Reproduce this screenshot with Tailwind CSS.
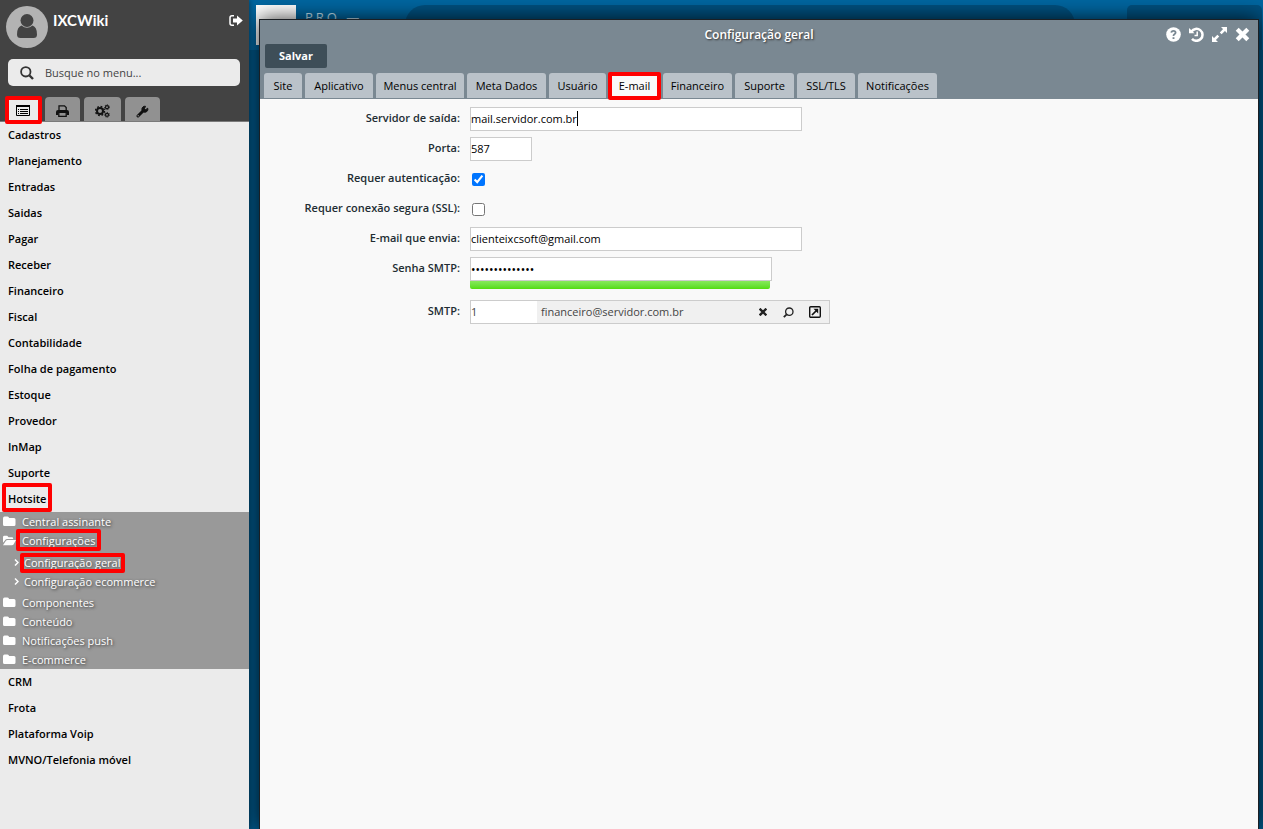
<!DOCTYPE html>
<html lang="pt-BR">
<head>
<meta charset="utf-8">
<title>IXCWiki - Configuração geral</title>
<script src="https://cdn.jsdelivr.net/npm/@tailwindcss/browser@4"></script>
</head>
<body class="flex h-screen overflow-hidden bg-[#0066a0] font-['Open_Sans',sans-serif] text-[11px] text-black">
<svg class="hidden">
  <symbol id="folder" viewBox="0 0 13 11"><path fill="#fff" d="M0 2.500Q0 .5 1.500 .5H4.500Q6 .5 6 2H11Q12.500 2 12.500 3.500V8.500Q12.500 10 11 10H1.500Q0 10 0 8.500Z"/></symbol>
</svg>

<aside class="relative z-10 flex w-[249px] shrink-0 flex-col bg-[#ebebeb] shadow-[0_0_6px_rgba(0,0,0,0.5)]">
  <header class="flex h-[122px] flex-col border-b border-[#7a7a7a] bg-[#434343]">
    <div class="flex items-start px-[6px] pt-[6px]">
      <svg class="size-[42px]" viewBox="0 0 42 42"><circle cx="21" cy="21" r="21" fill="#b3b3b3"/><circle cx="21" cy="14.500" r="6.500" fill="#434343"/><path fill="#434343" d="M15.500 19.500Q21 24 26.500 19.500Q31 21 31 28.500Q31 32 27.500 32H14.500Q11 32 11 28.500Q11 21 15.500 19.500Z"/></svg>
      <h1 class="ml-[5px] mt-[4px] flex-1 font-['Lato',sans-serif] text-[15px] leading-[20px] font-bold text-white">IXCWiki</h1>
      <button type="button" aria-label="Sair" class="mt-[9px]"><svg class="h-[11px] w-[14px]" viewBox="0 0 14 11"><path d="M5 .8H3Q1 .8 1 2.800V8.200Q1 10.200 3 10.200H5" fill="none" stroke="#fff" stroke-width="1.500"/><path fill="#fff" d="M4 3.500H8V.5L13.800 5.500L8 10.500V7.500H4Z"/></svg></button>
    </div>
    <label class="mr-[9px] ml-2 mt-[11px] flex h-[27px] items-center rounded-[5px] bg-[#ebebeb] pl-3">
      <svg class="size-[14px]" viewBox="0 0 14 14" fill="none" stroke="#333" stroke-width="1.800"><circle cx="5.800" cy="5.800" r="4.700"/><path d="M9.500 9.500L13 13" stroke-width="2.400"/></svg>
      <input type="text" aria-label="Busque no menu" placeholder="Busque no menu..." class="ml-[11px] w-44 bg-transparent pt-px outline-none placeholder:text-[#444]">
    </label>
    <nav class="mt-auto flex gap-[4px] pl-[6px]">
      <button type="button" aria-label="Menu" class="relative flex h-[24px] w-[35px] items-center justify-center rounded-t bg-[#ebebeb] pt-[2px] pr-px"><svg class="h-[11px] w-[14px]" viewBox="0 0 14 11"><path fill="none" stroke="#000" d="M.5 .5H13.500V10.500H.5Z"/><path stroke="#000" d="M0 1H14" stroke-width="2"/><path stroke="#000" d="M2 4.500H3M4 4.500H12M2 6.500H3M4 6.500H12M2 8.500H3M4 8.500H12"/></svg><span class="absolute -inset-x-px -top-px -bottom-[3px] rounded-[2px] border-4 border-[#f00]"></span></button>
      <button type="button" aria-label="Imprimir" class="flex h-[24px] w-[35px] items-center justify-center rounded-t bg-[#919191] pt-1"><svg class="h-[12px] w-[13px]" viewBox="0 0 13 12"><path d="M3 6V.8H8.500L10.200 2.500V6" fill="none" stroke="#111" stroke-width="1.300"/><path fill="#111" d="M0 7Q0 5 2 5H11Q13 5 13 7V10H10.800V8H2.200V10H0Z"/><path d="M2.800 8V11.300H10.200V8" fill="none" stroke="#111" stroke-width="1.300"/></svg></button>
      <button type="button" aria-label="Engrenagens" class="flex h-[24px] w-[37px] items-center justify-center rounded-t bg-[#919191] pt-1"><svg class="h-[14px] w-[15px]" viewBox="0 0 15 14" fill="none" stroke="#111"><circle cx="5" cy="7" r="3" stroke-width="2"/><circle cx="5" cy="7" r="4.500" stroke-width="1.400" stroke-dasharray="1.770 1.770"/><circle cx="12" cy="3.200" r="1.500" stroke-width="1.200"/><circle cx="12" cy="3.200" r="2.400" stroke-dasharray="1 1"/><circle cx="12" cy="10.800" r="1.500" stroke-width="1.200"/><circle cx="12" cy="10.800" r="2.400" stroke-dasharray="1 1"/></svg></button>
      <button type="button" aria-label="Ferramentas" class="flex h-[24px] w-[35px] items-center justify-center rounded-t bg-[#919191] pt-1"><svg class="size-[13px]" viewBox="0 0 13 13"><path d="M2 11L7.500 5.500" stroke="#111" stroke-width="3" stroke-linecap="round"/><path d="M11.700 3.200A3 3 0 1 1 9.500 1.300L8.500 3.500L9.700 4.700Z" fill="#111" stroke="#111"/><circle cx="2.200" cy="10.800" r=".7" fill="#919191"/></svg></button>
    </nav>
  </header>
  <nav class="font-semibold *:block *:px-2 *:leading-[26px]">
    <a href="#">Cadastros</a><a href="#">Planejamento</a><a href="#">Entradas</a><a href="#">Saidas</a><a href="#">Pagar</a><a href="#">Receber</a><a href="#">Financeiro</a><a href="#">Fiscal</a><a href="#">Contabilidade</a><a href="#">Folha de pagamento</a><a href="#">Estoque</a><a href="#">Provedor</a><a href="#">InMap</a><a href="#">Suporte</a>
    <a href="#"><span class="relative inline-block">Hotsite<span class="absolute -inset-x-[6px] -top-[3px] bottom-0 rounded-[2px] border-4 border-[#f00]"></span></span></a>
  </nav>
  <nav class="bg-[#999] leading-[19px] text-white [text-shadow:1px_1px_3px_#333]">
    <a href="#" class="flex items-center gap-[6px] pl-[3px]"><svg class="h-[11px] w-[13px]"><use href="#folder"/></svg>Central assinante</a>
    <a href="#" class="flex items-center gap-[6px] pl-[3px]"><svg class="h-[11px] w-[13px]" viewBox="0 0 14 11"><path fill="#fff" d="M0 8V2Q0 .5 1.500 .5H4.500L6 2H10Q11 2 11 4H4.500Q3 4 2 5.500ZM0 10.500L3 6Q3.600 5 5 5H14L11.500 9.500Q11 10.500 9.500 10.500Z"/></svg><span class="relative">Configurações<span class="absolute -inset-x-[6px] -top-[2px] -bottom-px rounded-[2px] border-4 border-[#f00]"></span></span></a>
    <div class="pt-[3px] pb-[2px]">
      <a href="#" class="flex items-center gap-[5px] pl-[14px]"><svg class="h-[7px] w-[5px]" viewBox="0 0 5 7"><path d="M1 .5L4 3.500L1 6.500" fill="none" stroke="#fff" stroke-width="1.500"/></svg><span class="relative">Configuração geral<span class="absolute -inset-x-[4px] top-0 -bottom-px rounded-[2px] border-4 border-[#f00]"></span></span></a>
      <a href="#" class="flex items-center gap-[5px] pl-[14px]"><svg class="h-[7px] w-[5px]" viewBox="0 0 5 7"><path d="M1 .5L4 3.500L1 6.500" fill="none" stroke="#fff" stroke-width="1.500"/></svg>Configuração ecommerce</a>
    </div>
    <a href="#" class="flex items-center gap-[6px] pl-[3px]"><svg class="h-[11px] w-[13px]"><use href="#folder"/></svg>Componentes</a>
    <a href="#" class="flex items-center gap-[6px] pl-[3px]"><svg class="h-[11px] w-[13px]"><use href="#folder"/></svg>Conteúdo</a>
    <a href="#" class="flex items-center gap-[6px] pl-[3px]"><svg class="h-[11px] w-[13px]"><use href="#folder"/></svg>Notificações push</a>
    <a href="#" class="flex items-center gap-[6px] pl-[3px]"><svg class="h-[11px] w-[13px]"><use href="#folder"/></svg>E-commerce</a>
  </nav>
  <nav class="font-semibold *:block *:px-2 *:leading-[26px]"><a href="#">CRM</a><a href="#">Frota</a><a href="#">Plataforma Voip</a><a href="#">MVNO/Telefonia móvel</a></nav>
</aside>

<main class="relative flex min-w-0 flex-1 flex-col overflow-hidden">
  <div class="flex h-[50px] items-start pt-[5px] pl-[7px] pr-px">
    <div class="h-10 w-10 bg-white"></div>
    <div class="ml-[9px] mt-[3px] w-[100px] text-[13px] tracking-[3px] text-[#c4e2f2]">PRO —</div>
    <div class="h-10 flex-1 rounded-t-[20px] bg-[#00507f]"></div>
    <div class="ml-[52px] h-full w-[135px] rounded-t-[5px] bg-[#00507f]"></div>
  </div>
  <div class="flex-1 bg-[#005788]"></div>

  <section class="absolute top-[19px] right-[4px] bottom-0 left-[10px] flex flex-col border border-b-0 border-[#1b1f24] bg-[#f9f9f9] shadow-[0_0_20px_rgba(0,0,0,0.8)]">
    <header class="bg-[#7a8892]">
      <div class="grid h-6 grid-cols-[1fr_auto_1fr] items-center px-[8px] pt-[4px]">
        <h2 class="col-start-2 pt-px text-[12px] leading-[18px] font-semibold text-white [text-shadow:1px_1px_2px_#333]">Configuração geral</h2>
        <div class="flex items-center justify-end gap-[8px]">
          <button type="button" aria-label="Ajuda"><svg class="size-[15px]" viewBox="0 0 15 15"><circle cx="7.500" cy="7.500" r="7.300" fill="#fff"/><path d="M5.300 5.700Q5.500 3.800 7.500 3.800T9.600 5.600Q9.600 6.700 8.400 7.300Q7.500 7.800 7.500 9" fill="none" stroke="#7a8892" stroke-width="1.800"/><path stroke="#7a8892" stroke-width="1.900" d="M7.500 10.200V12"/></svg></button>
          <button type="button" aria-label="Histórico"><svg class="size-[15px]" viewBox="0 0 15 15" fill="none" stroke="#fff"><path d="M2.500 4.500A6 6 0 1 1 3 11.800" stroke-width="2.500"/><path d="M0 1V6.200H5.500Z" fill="#fff" stroke="none"/><path d="M8.200 4.500V8.500H5.500" stroke-width="1.500"/></svg></button>
          <button type="button" aria-label="Maximizar"><svg class="size-[15px]" viewBox="0 0 15 15"><path d="M9 0H15V6ZM0 9V15H6Z" fill="#fff"/><path d="M2.500 12.500L6.300 8.700M8.700 6.300L12.500 2.500" stroke="#fff" stroke-width="2.600"/></svg></button>
          <button type="button" aria-label="Fechar"><svg class="size-[15px]" viewBox="0 0 15 15"><path d="M3.700 3.700L11.300 11.300M11.300 3.700L3.700 11.300" stroke="#fff" stroke-width="4.200" stroke-linecap="square"/></svg></button>
        </div>
      </div>
      <button type="button" class="ml-[5px] block h-6 w-[62px] rounded-[2px] bg-[#3e4e58] font-bold text-white">Salvar</button>
      <nav class="mt-[5px] grid grid-cols-[38px_68px_88px_79px_57px_51px_69px_59px_58px_79px] gap-[3px] pb-px pl-[4px] *:h-[25px] *:rounded-t-[3px] *:pt-px">
        <button type="button" class="bg-[#bac2c9]">Site</button>
        <button type="button" class="bg-[#bac2c9]">Aplicativo</button>
        <button type="button" class="bg-[#bac2c9]">Menus central</button>
        <button type="button" class="bg-[#bac2c9]">Meta Dados</button>
        <button type="button" class="bg-[#bac2c9]">Usuário</button>
        <button type="button" class="relative bg-[#f9f9f9]">E-mail<span class="absolute -inset-x-px -top-px -bottom-[2px] rounded-[2px] border-4 border-[#f00]"></span></button>
        <button type="button" class="bg-[#bac2c9]">Financeiro</button>
        <button type="button" class="bg-[#bac2c9]">Suporte</button>
        <button type="button" class="bg-[#bac2c9]">SSL/TLS</button>
        <button type="button" class="bg-[#bac2c9]">Notificações</button>
      </nav>
    </header>
    <form class="grid grid-cols-[200px_1fr] gap-x-[10px] gap-y-[6px] pt-[8px] [&>label]:text-right [&>label]:leading-[22px] [&>label]:font-semibold [&>label]:text-[#222d33]">
      <label for="host">Servidor de saída:</label>
      <div class="relative"><input id="host" type="text" value="mail.servidor.com.br" class="block h-6 w-[332px] border border-[#ccc] bg-white pb-px outline-none"><span class="absolute top-[4px] left-[107px] h-[15px] w-px bg-black"></span></div>
      <label for="port">Porta:</label>
      <input id="port" type="text" value="587" class="h-6 w-[62px] border border-[#ccc] bg-white pb-px">
      <label for="auth">Requer autenticação:</label>
      <div class="flex h-6 items-center pl-[2px]"><input id="auth" type="checkbox" checked class="size-[13px]"></div>
      <label for="ssl">Requer conexão segura (SSL):</label>
      <div class="flex h-6 items-center pl-[2px]"><input id="ssl" type="checkbox" class="size-[13px]"></div>
      <label for="from">E-mail que envia:</label>
      <input id="from" type="text" value="clienteixcsoft@gmail.com" class="h-6 w-[332px] border border-[#ccc] bg-white pb-px">
      <label for="pass">Senha SMTP:</label>
      <div class="pb-[5px]"><input id="pass" type="password" value="senhasmtp12345" class="block h-6 w-[302px] border border-[#ccc] bg-white text-[12px]"><div class="h-2 w-[300px] rounded-b-[2px] bg-linear-to-b from-[#86e95a] to-[#52dc06]"></div></div>
      <label for="smtp">SMTP:</label>
      <div class="flex h-6 w-[360px] items-center border border-[#ccc] bg-[#f0f0f0] text-[#444]">
        <input id="smtp" type="text" value="1" class="h-full w-[66px] bg-white pb-px">
        <span class="flex-1 pl-1">financeiro@servidor.com.br</span>
        <button type="button" aria-label="Limpar"><svg class="size-[8px]" viewBox="0 0 8 8"><path d="M1.500 1.500L6.500 6.500M6.500 1.500L1.500 6.500" stroke="#222" stroke-width="2.400" stroke-linecap="square"/></svg></button>
        <button type="button" aria-label="Buscar" class="ml-[16px]"><svg class="size-[11px]" viewBox="0 0 11 11" fill="none" stroke="#222"><circle cx="6.300" cy="4.700" r="3.700" stroke-width="1.300"/><path d="M3.700 7.300L.8 10.200" stroke-width="1.800"/></svg></button>
        <button type="button" aria-label="Abrir" class="mr-[8px] ml-[15px]"><svg class="size-[12px]" viewBox="0 0 12 12" fill="none" stroke="#111"><rect x=".7" y=".7" width="10.600" height="10.600" rx="1" stroke-width="1.400"/><path d="M3 9L7.500 4.500" stroke-width="1.700"/><path d="M4.500 2.800H9.200V7.500Z" fill="#111" stroke="none"/></svg></button>
      </div>
    </form>
  </section>
</main>
</body>
</html>
